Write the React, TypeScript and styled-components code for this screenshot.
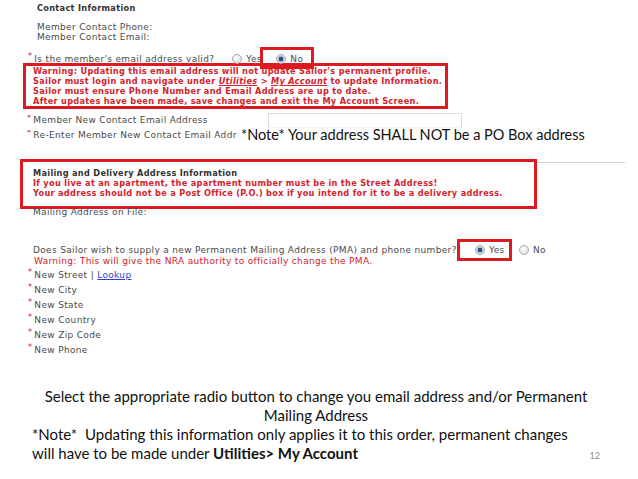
import styled, { createGlobalStyle } from "styled-components";

const Global = createGlobalStyle`
  body { margin: 0; background: #fff; }
`;

const RED = "#dc1a22";

const Slide = styled.div`
  position: relative;
  width: 638px;
  height: 479px;
  background: #fff;
  overflow: hidden;
  display: flex;
  flex-direction: column;
`;

const Shot = styled.div`
  height: 387px;
  font-family: "DejaVu Sans", Verdana, sans-serif;
  font-size: 9px;
  letter-spacing: 0.33px;
  line-height: 10px;
  color: #4a4a4a;
  white-space: nowrap;
`;

const Title = styled.div<{ $top: number; $left: number }>`
  margin: ${(p) => p.$top}px 0 0 ${(p) => p.$left}px;
  font-weight: bold;
  font-size: 8.2px;
  letter-spacing: 0.3px;
  color: #333;
`;

const Line = styled.div<{ $top: number; $left: number; $red?: boolean }>`
  margin: ${(p) => p.$top}px 0 0 ${(p) => p.$left}px;
  color: ${(p) => (p.$red ? "#d4232c" : "inherit")};
`;

const QuestionRow = styled.div<{ $top: number; $left: number }>`
  position: relative;
  display: flex;
  align-items: center;
  height: 10px;
  margin-top: ${(p) => p.$top}px;
  padding-left: ${(p) => p.$left}px;
`;

const Label = styled.span<{ $w: number }>`
  display: inline-block;
  width: ${(p) => p.$w}px;
  flex-shrink: 0;
  overflow: hidden;
`;

const Star = styled.span`
  color: ${RED};
  font-size: 8px;
  margin-right: 2px;
  position: relative;
  top: -2px;
`;

const Radio = styled.span<{ $on?: boolean }>`
  display: inline-block;
  flex-shrink: 0;
  width: 8px;
  height: 8px;
  border-radius: 50%;
  border: 1px solid #a8a8a8;
  background: ${(p) =>
    p.$on
      ? "radial-gradient(circle, #2a4f7a 0 2px, #9fb9d4 2.5px, #e8eef4 4px)"
      : "radial-gradient(circle at 40% 35%, #ffffff 0, #e4e4e4 70%, #cfcfcf 100%)"};
  margin-right: 4px;
`;

const Choice = styled.span<{ $w: number }>`
  display: inline-flex;
  align-items: center;
  width: ${(p) => p.$w}px;
  color: #4a4a4a;
`;

const Highlight = styled.div<{ $left: number; $top: number; $w: number }>`
  position: absolute;
  left: ${(p) => p.$left}px;
  top: ${(p) => p.$top}px;
  width: ${(p) => p.$w}px;
  height: 22px;
  box-sizing: border-box;
  border: 3px solid ${RED};
`;

const WarnBox = styled.div<{ $top: number }>`
  box-sizing: border-box;
  margin: ${(p) => p.$top}px 0 0 23px;
  width: 425px;
  border: 3px solid ${RED};
  padding: 0 0 0 7px;
  font-weight: bold;
  font-size: 8.2px;
  letter-spacing: 0.3px;
  color: #d4232c;
`;

const WarnLine = styled.div<{ $dark?: boolean }>`
  height: 10px;
  color: ${(p) => (p.$dark ? "#333" : "inherit")};
`;

const Link = styled.span`
  font-style: italic;
  text-decoration: underline;
`;

const EmailRow = styled.div<{ $top: number }>`
  display: flex;
  align-items: center;
  height: 14px;
  margin-top: ${(p) => p.$top}px;
  padding-left: 27px;
`;

const TextInput = styled.div`
  width: 192px;
  height: 13px;
  border: 1px solid #dcdcdc;
  border-bottom-color: #f2f2f2;
`;

const SlideNote = styled.span`
  font-family: Lato, "Open Sans", sans-serif;
  font-size: 14.5px;
  letter-spacing: 0;
  color: #111;
  margin-left: 4px;
`;

const MailSection = styled.div<{ $top: number }>`
  display: flex;
  align-items: flex-start;
  margin: ${(p) => p.$top}px 0 0 20px;
`;

const MailBox = styled.div`
  box-sizing: border-box;
  width: 517px;
  height: 50px;
  border: 3px solid ${RED};
  padding: 6px 0 0 10px;
  font-weight: bold;
  font-size: 8.2px;
  letter-spacing: 0.3px;
  color: #d4232c;
`;

const Rule = styled.div`
  flex: 0 0 88px;
  height: 1px;
  margin-top: 3px;
  background: #cfcfcf;
`;

const FieldRow = styled.div<{ $top?: number }>`
  display: flex;
  align-items: center;
  height: 15px;
  margin-top: ${(p) => p.$top ?? 0}px;
  padding-left: 28px;
`;

const Lookup = styled.span`
  color: #2b3fd0;
  text-decoration: underline;
`;

const Caption = styled.div`
  font-family: Lato, "Open Sans", sans-serif;
  font-size: 15px;
  line-height: 19px;
  color: #111;
  padding: 0 0 0 32px;
`;

const CenterPara = styled.div`
  width: 568px;
  text-align: center;
`;

const NoteRow = styled.div`
  display: flex;
  align-items: flex-end;
  justify-content: space-between;
  width: 568px;
`;

const PageNum = styled.span`
  font-size: 9px;
  color: #8a8a8a;
  line-height: 14px;
`;

const fields = ["New City", "New State", "New Country", "New Zip Code", "New Phone"];

export default function App() {
  return (
    <Slide>
      <Global />
      <Shot>
        <Title $top={3} $left={37}>Contact Information</Title>
        <Line $top={9} $left={37}>Member Contact Phone:</Line>
        <Line $top={0} $left={37}>Member Contact Email:</Line>

        <QuestionRow $top={12} $left={28}>
          <Star>*</Star>
          <Label $w={198}>Is the member's email address valid?</Label>
          <Choice $w={44}>
            <Radio />
            Yes
          </Choice>
          <Choice $w={40}>
            <Radio $on />
            No
          </Choice>
          <Highlight $left={260} $top={-7} $w={54} />
        </QuestionRow>

        <WarnBox $top={-1}>
          <WarnLine>Warning: Updating this email address will not update Sailor's permanent profile.</WarnLine>
          <WarnLine>
            Sailor must login and navigate under <Link>Utilities</Link> &gt; <Link>My Account</Link> to
            update Information.
          </WarnLine>
          <WarnLine>Sailor must ensure Phone Number and Email Address are up to date.</WarnLine>
          <WarnLine>After updates have been made, save changes and exit the My Account Screen.</WarnLine>
        </WarnBox>

        <EmailRow $top={4}>
          <Label $w={241}>
            <Star>*</Star>Member New Contact Email Address
          </Label>
          <TextInput />
        </EmailRow>
        <EmailRow $top={1}>
          <Label $w={210}>
            <Star>*</Star>Re-Enter Member New Contact Email Address
          </Label>
          <SlideNote>*Note* Your address SHALL NOT be a PO Box address</SlideNote>
        </EmailRow>

        <MailSection $top={17}>
          <MailBox>
            <WarnLine $dark>Mailing and Delivery Address Information</WarnLine>
            <WarnLine>If you live at an apartment, the apartment number must be in the Street Address!</WarnLine>
            <WarnLine>
              Your address should not be a Post Office (P.O.) box if you intend for it to be a delivery address.
            </WarnLine>
          </MailBox>
          <Rule />
        </MailSection>
        <Line $top={-2} $left={33}>Mailing Address on File:</Line>

        <QuestionRow $top={28} $left={33}>
          <Label $w={442}>Does Sailor wish to supply a new Permanent Mailing Address (PMA) and phone number?</Label>
          <Choice $w={44}>
            <Radio $on />
            Yes
          </Choice>
          <Choice $w={40}>
            <Radio />
            No
          </Choice>
          <Highlight $left={457} $top={-6} $w={55} />
        </QuestionRow>
        <Line $top={1} $left={34} $red>
          Warning: This will give the NRA authority to officially change the PMA.
        </Line>

        <FieldRow $top={1}>
          <Star>*</Star>New Street&nbsp;|&nbsp;<Lookup>Lookup</Lookup>
        </FieldRow>
        {fields.map((f) => (
          <FieldRow key={f}>
            <Star>*</Star>
            {f}
          </FieldRow>
        ))}
      </Shot>

      <Caption>
        <CenterPara>
          Select the appropriate radio button to change you email address and/or Permanent
          <br />
          Mailing Address
        </CenterPara>
        <div>*Note*&nbsp; Updating this information only applies it to this order, permanent changes</div>
        <NoteRow>
          <span>
            will have to be made under <b>Utilities&gt; My Account</b>
          </span>
          <PageNum>12</PageNum>
        </NoteRow>
      </Caption>
    </Slide>
  );
}
